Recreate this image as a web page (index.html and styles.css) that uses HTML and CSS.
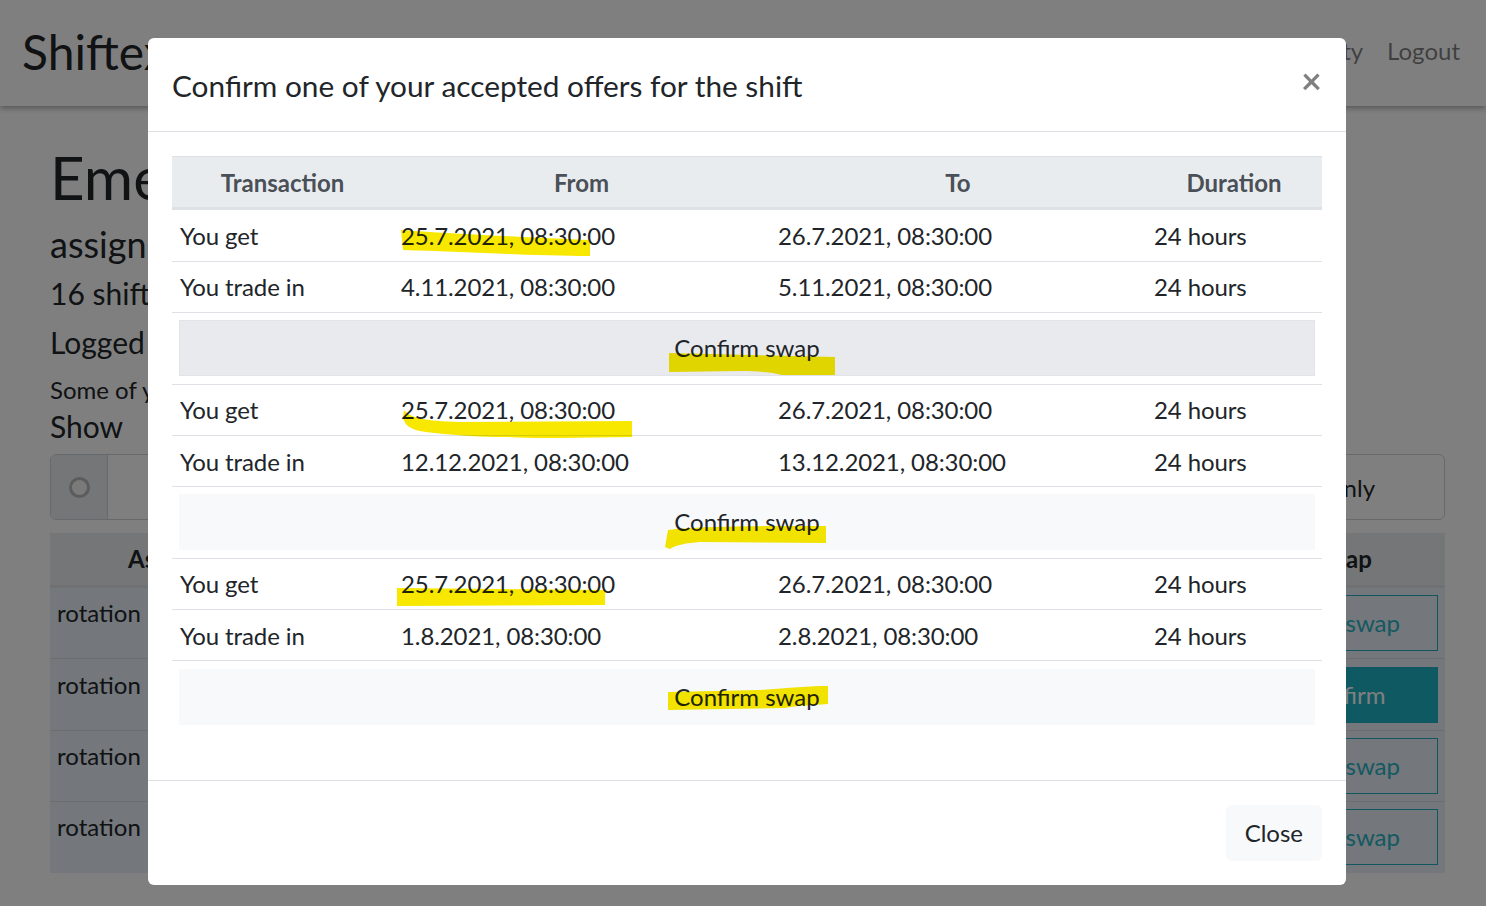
FILE: index.html
```html
<!DOCTYPE html>
<html lang="en">
<head>
<meta charset="utf-8">
<title>Shiftex</title>
<link rel="stylesheet" href="styles.css">
</head>
<body>
<nav class="navbar">
  <span class="brand">Shiftex</span>
  <div class="nav-links">
    <a class="nav-link">Duty</a>
    <a class="nav-link">Logout</a>
  </div>
</nav>
<main class="page">
  <h1 class="page-title">Eme</h1>
  <h2 class="subtitle">assign</h2>
  <p class="stat">16 shifts</p>
  <p class="stat stat-gap">Logged</p>
  <p class="note">Some of y</p>
  <p class="stat show">Show</p>
  <div class="filter-group">
    <span class="filter-radio"><span class="radio-ring"></span></span>
    <span class="filter-fill"></span>
    <span class="filter-opt">Mine only</span>
  </div>
  <table class="shift-table">
    <thead>
      <tr><th class="s1"><span class="head-left">As</span></th><th></th><th></th><th class="s4">Swap</th></tr>
    </thead>
    <tbody>
      <tr><td>rotation</td><td></td><td></td><td><button class="sbtn">swap</button></td></tr>
      <tr><td>rotation</td><td></td><td></td><td><button class="sbtn sbtn-fill">Confirm</button></td></tr>
      <tr><td>rotation</td><td></td><td></td><td><button class="sbtn">swap</button></td></tr>
      <tr><td>rotation</td><td></td><td></td><td><button class="sbtn">swap</button></td></tr>
    </tbody>
  </table>
</main>

<div class="backdrop"></div>

<div class="modal">
  <div class="dialog">
    <div class="dialog-header">
      <h5 class="dialog-title">Confirm one of your accepted offers for the shift</h5>
      <button class="close-x" aria-label="Close">×</button>
    </div>
    <div class="dialog-body">
      <table class="offers">
        <thead>
          <tr><th class="c1">Transaction</th><th class="c2">From</th><th class="c3">To</th><th class="c4">Duration</th></tr>
        </thead>
        <tbody>
          <tr><td>You get</td><td>25.7.2021, 08:30:00</td><td>26.7.2021, 08:30:00</td><td>24 hours</td></tr>
          <tr><td>You trade in</td><td>4.11.2021, 08:30:00</td><td>5.11.2021, 08:30:00</td><td>24 hours</td></tr>
          <tr><td colspan="4" class="confirm-cell"><button class="confirm-btn confirm-active">Confirm swap</button></td></tr>
          <tr><td>You get</td><td>25.7.2021, 08:30:00</td><td>26.7.2021, 08:30:00</td><td>24 hours</td></tr>
          <tr><td>You trade in</td><td>12.12.2021, 08:30:00</td><td>13.12.2021, 08:30:00</td><td>24 hours</td></tr>
          <tr><td colspan="4" class="confirm-cell"><button class="confirm-btn">Confirm swap</button></td></tr>
          <tr><td>You get</td><td>25.7.2021, 08:30:00</td><td>26.7.2021, 08:30:00</td><td>24 hours</td></tr>
          <tr><td>You trade in</td><td>1.8.2021, 08:30:00</td><td>2.8.2021, 08:30:00</td><td>24 hours</td></tr>
          <tr><td colspan="4" class="confirm-cell"><button class="confirm-btn">Confirm swap</button></td></tr>
        </tbody>
      </table>
    </div>
    <div class="dialog-footer">
      <button class="close-btn">Close</button>
    </div>
  </div>

  <svg class="marks" width="1486" height="906" viewBox="0 0 1486 906" aria-hidden="true">
    <path d="M401,230 C440,233 520,237 590,240 L590,256 C540,256 470,252 403,250 Z"/>
    <path d="M669,353 L835,357 L835,375 L782,375 C770,372 758,371 740,371 L669,372 Z"/>
    <path d="M404,410 C410,418 425,421 460,422 L632,421 L632,437 L560,438 C500,438 450,436 420,431 C410,429 405,425 403,418 Z"/>
    <path d="M668,530 C700,526 760,526 826,526 L826,543 L700,542 C686,543 676,545 670,549 L665,547 Z"/>
    <path d="M397,588 L605,590 L605,605 L397,606 Z"/>
    <path d="M668,692 L760,690 C790,688 810,686 828,686 L828,704 C810,705 795,706 785,708 L668,710 Z"/>
  </svg>
</div>
</body>
</html>
```

FILE: styles.css
```css
* { box-sizing: border-box; }

html, body {
  margin: 0;
  width: 1486px;
  height: 906px;
  overflow: hidden;
  background: #ffffff;
  font-family: "Lato", "Liberation Sans", sans-serif;
  color: #212529;
}

/* ---------- background page ---------- */
.navbar {
  height: 106px;
  display: flex;
  align-items: center;
  justify-content: space-between;
  padding: 0 26px 0 22px;
  background: #ffffff;
  box-shadow: 0 2px 6px rgba(0, 0, 0, 0.35);
  position: relative;
}

.brand {
  font-size: 48px;
  line-height: 1.2;
  color: #212529;
  margin-top: -2px;
}

.nav-links {
  display: flex;
  align-items: center;
  margin-top: -4px;
}

.nav-link {
  font-size: 24px;
  line-height: 18px;
  padding: 0 12px;
  color: rgba(0, 0, 0, 0.5);
}

.nav-link:last-child { padding-right: 0; }

.page {
  padding: 0 41px 0 50px;
}

.page-title {
  margin: 35px 0 10px;
  font-size: 60px;
  line-height: 72px;
  font-weight: 400;
}

.subtitle {
  margin: 0 0 9px;
  font-size: 36px;
  line-height: 43px;
  font-weight: 400;
}

.stat {
  margin: 0;
  font-size: 30px;
  line-height: 36px;
}

.stat-gap { margin-top: 13px; }

.note {
  margin: 15px 0 0;
  font-size: 24px;
  line-height: 30px;
}

.show { margin-top: 3px; }

.filter-group {
  margin-top: 10px;
  height: 66px;
  display: flex;
  border: 1.5px solid #ced4da;
  border-radius: 6px;
  overflow: hidden;
}

.filter-radio {
  width: 57px;
  display: flex;
  align-items: center;
  justify-content: center;
  background: #e9ecef;
  border-right: 1.5px solid #ced4da;
}

.radio-ring {
  width: 21px;
  height: 21px;
  border-radius: 50%;
  border: 3px solid #b8b8b8;
  background: #f4f4f4;
}

.filter-fill {
  flex: 1;
}

.filter-opt {
  width: 244px;
  font-size: 24px;
  display: flex;
  align-items: center;
  justify-content: center;
  border-left: 1.5px solid #ced4da;
}

.shift-table {
  margin-top: 13px;
  width: 100%;
  border-collapse: collapse;
  font-size: 24px;
}

.shift-table th {
  background: #e9ecef;
  font-weight: 700;
  line-height: 36px;
  padding: 8px 7px;
  border-bottom: 3px solid #dee2e6;
  color: #212529;
}

.shift-table .s1 {
  width: 252px;
  text-align: left;
}

.head-left {
  padding-left: 71px;
}

.shift-table .s4 { width: 204px; }

.shift-table td {
  background: #e8eff7;
  vertical-align: top;
  line-height: 36px;
  padding: 7.2px 7px;
  border-top: 1px solid #d6dce3;
}

.sbtn {
  display: block;
  width: 100%;
  font-family: inherit;
  font-size: 24px;
  line-height: 36px;
  padding: 9px 37px 9px 18px;
  border: 1.5px solid #20aebf;
  border-radius: 0;
  background: transparent;
  color: #2ab2c4;
  text-align: right;
}

.sbtn-fill {
  background: #1cb3c4;
  color: #ffffff;
  text-align: center;
  padding: 9px 18px;
}

/* ---------- modal ---------- */
.backdrop {
  position: fixed;
  inset: 0;
  background: rgba(0, 0, 0, 0.5);
}

.modal {
  position: fixed;
  inset: 0;
  padding: 38px 0 0 148px;
}

.dialog {
  width: 1198px;
  background: #ffffff;
  border-radius: 6px;
  display: flex;
  flex-direction: column;
}

.dialog-header {
  display: flex;
  align-items: flex-start;
  padding: 24px;
  border-bottom: 1px solid #dee2e6;
}

.dialog-title {
  margin: 1px 0 -1px;
  font-size: 29.8px;
  line-height: 45px;
  font-weight: 400;
  color: #212529;
}

.close-x {
  margin: -24px -24px -24px auto;
  padding: 24px;
  border: 0;
  background: transparent;
  font-family: inherit;
  font-size: 36px;
  font-weight: 700;
  line-height: 1;
  color: #000000;
  opacity: 0.5;
}

.dialog-body {
  padding: 24px;
}

.offers {
  width: 100%;
  border-collapse: collapse;
  table-layout: fixed;
  font-size: 24px;
  margin-bottom: 24px;
}

.offers .c1 { width: 221px; }
.offers .c2 { width: 377px; }
.offers .c3 { width: 376px; }
.offers .c4 { width: 176px; }

.offers th {
  background: #e9ecef;
  color: #495057;
  font-weight: 700;
  line-height: 36px;
  padding: 7.7px 7.2px 6.7px;
  text-align: center;
  border-top: 1px solid #dee2e6;
  border-bottom: 3px solid #dee2e6;
}

.offers td {
  line-height: 36px;
  padding: 7.7px 7.2px 6.7px 8px;
  border-top: 1px solid #dee2e6;
  color: #212529;
  white-space: nowrap;
  letter-spacing: -0.1px;
}

.offers td.confirm-cell {
  padding: 7.2px;
  letter-spacing: 0;
}

.confirm-btn {
  display: block;
  width: 100%;
  font-family: inherit;
  font-size: 24px;
  line-height: 36px;
  padding: 9px 18px;
  border: 1px solid #f8f9fa;
  border-radius: 0;
  background: #f8f9fa;
  color: #212529;
  text-align: center;
}

.confirm-active {
  background: #e8eaed;
  border-color: #e2e4e7;
}

.dialog-footer {
  display: flex;
  justify-content: flex-end;
  padding: 18px;
  border-top: 1px solid #dee2e6;
}

.close-btn {
  margin: 6px;
  font-family: inherit;
  font-size: 24px;
  line-height: 36px;
  padding: 9px 18px;
  border: 1px solid #f8f9fa;
  border-radius: 6px;
  background: #f8f9fa;
  color: #212529;
}

.marks {
  position: absolute;
  left: 0;
  top: 0;
  pointer-events: none;
  mix-blend-mode: multiply;
  fill: #f8e800;
}
```
